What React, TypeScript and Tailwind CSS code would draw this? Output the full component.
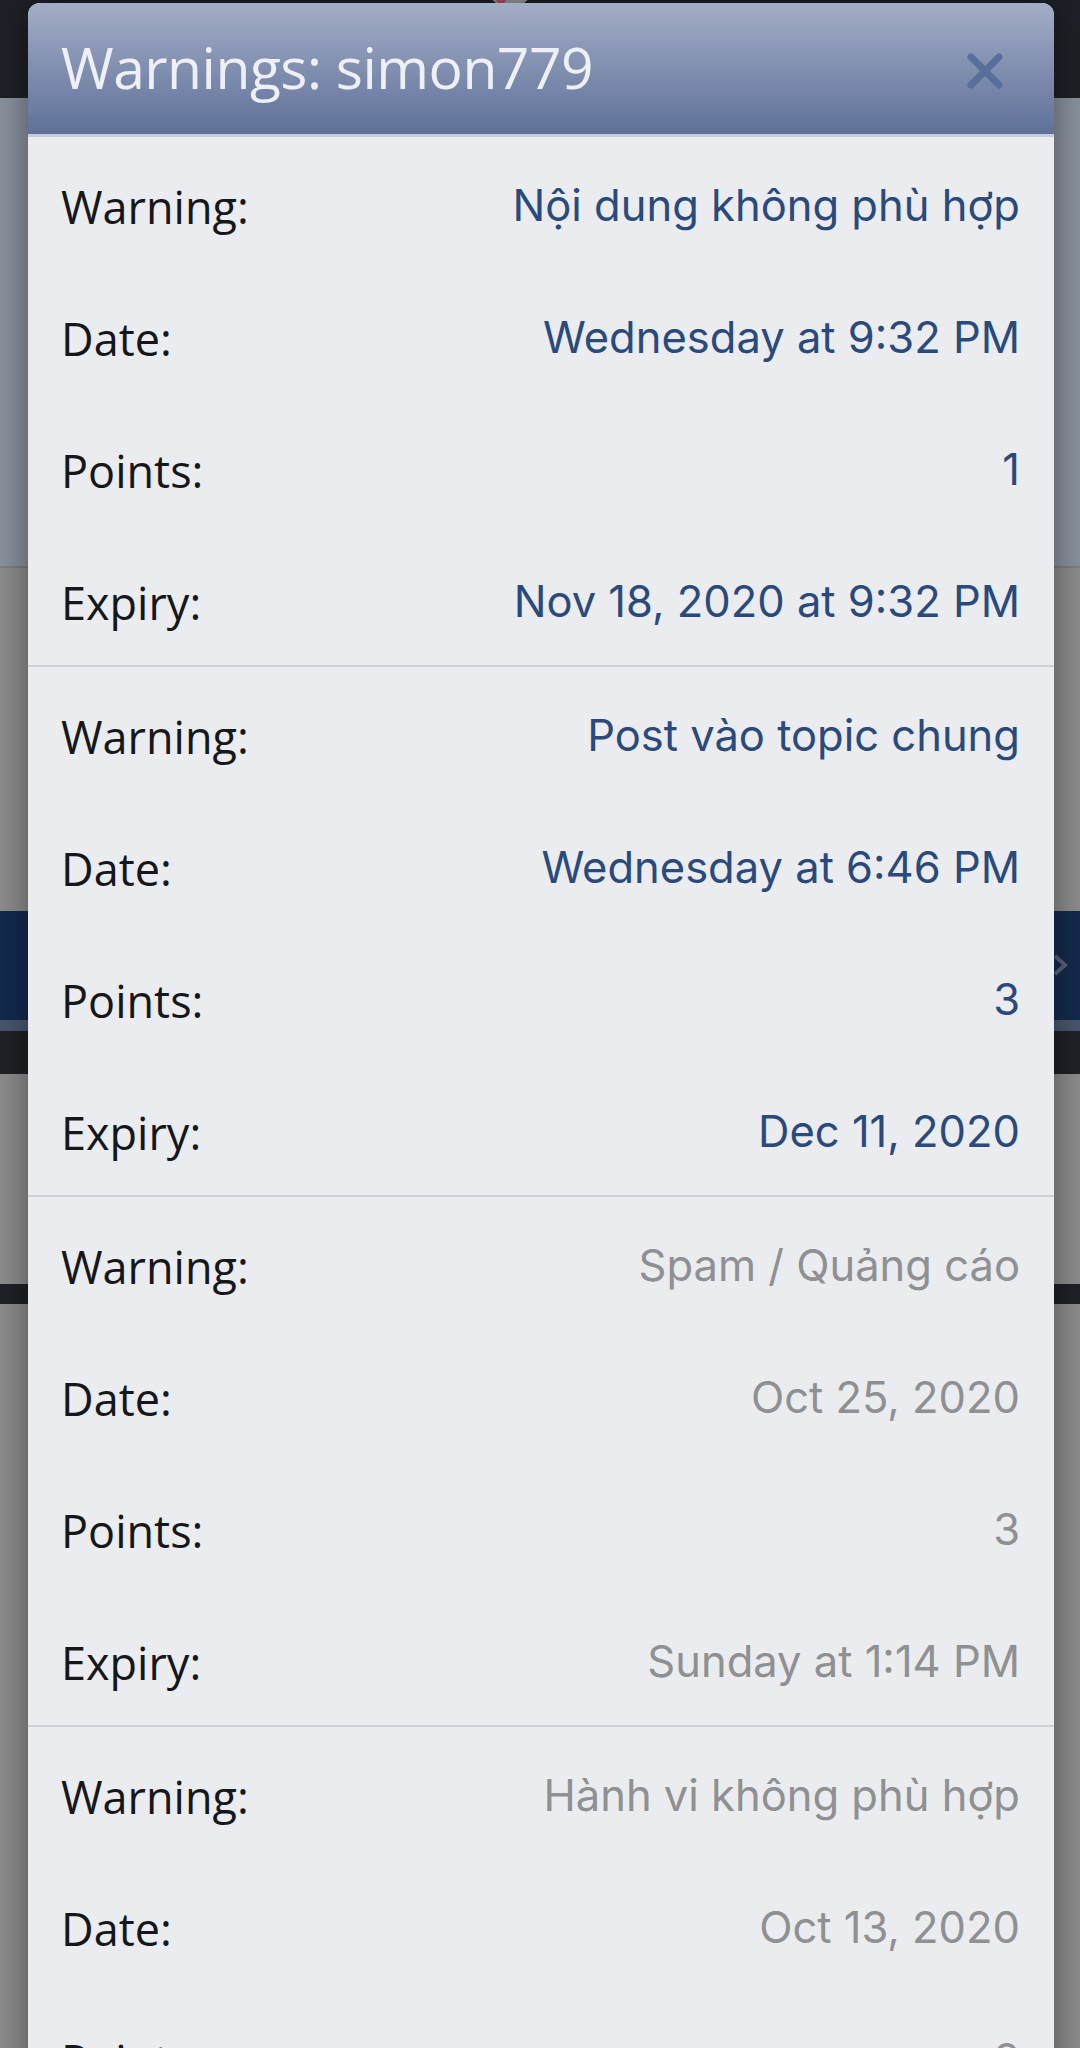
import React from "react";

type Row = { label: string; value: string };
type Warning = { rows: Row[]; active: boolean };

const warnings: Warning[] = [
  {
    active: true,
    rows: [
      { label: "Warning:", value: "Nội dung không phù hợp" },
      { label: "Date:", value: "Wednesday at 9:32 PM" },
      { label: "Points:", value: "1" },
      { label: "Expiry:", value: "Nov 18, 2020 at 9:32 PM" },
    ],
  },
  {
    active: true,
    rows: [
      { label: "Warning:", value: "Post vào topic chung" },
      { label: "Date:", value: "Wednesday at 6:46 PM" },
      { label: "Points:", value: "3" },
      { label: "Expiry:", value: "Dec 11, 2020" },
    ],
  },
  {
    active: false,
    rows: [
      { label: "Warning:", value: "Spam / Quảng cáo" },
      { label: "Date:", value: "Oct 25, 2020" },
      { label: "Points:", value: "3" },
      { label: "Expiry:", value: "Sunday at 1:14 PM" },
    ],
  },
  {
    active: false,
    rows: [
      { label: "Warning:", value: "Hành vi không phù hợp" },
      { label: "Date:", value: "Oct 13, 2020" },
      { label: "Points:", value: "2" },
      { label: "Expiry:", value: "Oct 13, 2020" },
    ],
  },
];

export default function App() {
  return (
    <div className="relative w-[1080px] h-[2048px] overflow-hidden bg-[#8d8d8d]">
      {/* dimmed page behind the overlay */}
      <div className="flex flex-col">
        <div className="h-[98px] bg-[#1e2127]" />
        <div className="h-[470px] bg-[#8a929e] border-b-2 border-[#7c7f84]" />
        <div className="h-[343px] bg-[#8d8d8d]" />
        <div className="relative h-[109px] bg-[#142a4d]">
          <svg
            width="16"
            height="24"
            viewBox="0 0 16 24"
            className="absolute right-[12px] top-[42px]"
          >
            <path d="M3 3 L13 12 L3 21" fill="none" stroke="#56627c" strokeWidth="4" />
          </svg>
        </div>
        <div className="h-[11px] bg-[#4a5670]" />
        <div className="h-[43px] bg-[#1f2226]" />
        <div className="h-[210px] bg-[#8d8d8d]" />
        <div className="h-[20px] bg-[#1f2226]" />
      </div>

      {/* avatar peeking above the modal */}
      <div className="absolute left-[488px] top-[-30px] w-[44px] h-[36px] rounded-full bg-[#9a9a9a]">
        <div className="absolute left-[8px] top-[24px] w-[10px] h-[10px] rounded-full bg-[#b0505a]" />
      </div>

      {/* modal */}
      <div className="absolute left-[28px] top-[3px] w-[1026px] rounded-t-[12px] overflow-hidden bg-[#eaecef] shadow-[0_0_36px_rgba(0,0,0,0.45)] font-['Open_Sans','Noto_Sans',sans-serif]">
        <div className="h-[134px] border-b-[3px] border-[#c6ccd8] bg-gradient-to-b from-[#a4adc6] to-[#5f7199] flex items-center justify-between pl-[33px] pr-[51px]">
          <h1 className="text-[57px] font-normal text-[#eef0f5] leading-none tracking-[-0.5px] pb-[2px]">
            Warnings: simon779
          </h1>
          <svg width="36" height="36" viewBox="0 0 36 36" className="mt-[4px]">
            <path
              d="M4 4 L32 32 M32 4 L4 32"
              stroke="#5a6e9c"
              strokeWidth="7"
              strokeLinecap="round"
            />
          </svg>
        </div>

        <div className="flex flex-col">
          {warnings.map((w, i) => (
            <div key={i} className="flex flex-col border-b-2 border-[#cdd0d4]">
              {w.rows.map((r) => (
                <div
                  key={r.label}
                  className="h-[132px] flex items-center justify-between pl-[33px] pr-[34px] pt-[6px]"
                >
                  <span className="text-[45px] leading-none text-[#16171a]">{r.label}</span>
                  <span
                    className={`text-[43.5px] leading-none font-['Inter','Noto_Sans',sans-serif] ${
                      w.active ? "text-[#2a4a7b]" : "text-[#8f9092]"
                    }`}
                  >
                    {r.value}
                  </span>
                </div>
              ))}
            </div>
          ))}
        </div>
      </div>
    </div>
  );
}
